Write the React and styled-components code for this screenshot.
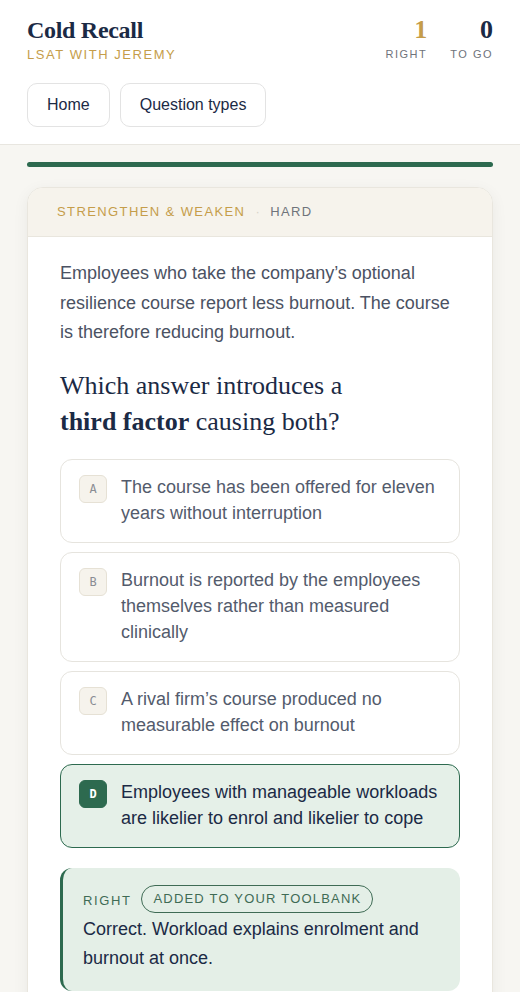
import React from "react";
import styled, { createGlobalStyle } from "styled-components";

const GlobalStyle = createGlobalStyle`
  * { box-sizing: border-box; }
  body {
    margin: 0;
    background: #f7f6f2;
    font-family: "Liberation Sans", Arial, sans-serif;
  }
`;

const options = [
  { letter: "A", text: "The course has been offered for eleven years without interruption" },
  { letter: "B", text: "Burnout is reported by the employees themselves rather than measured clinically" },
  { letter: "C", text: "A rival firm\u2019s course produced no measurable effect on burnout" },
  { letter: "D", text: "Employees with manageable workloads are likelier to enrol and likelier to cope", picked: true },
];

const App = () => {
  return (
    <>
      <GlobalStyle />
      <Header>
        <TopRow>
          <Brand>
            <Title>Cold Recall</Title>
            <Subtitle>LSAT WITH JEREMY</Subtitle>
          </Brand>
          <Stats>
            <Stat>
              <StatNum gold>1</StatNum>
              <StatLabel>RIGHT</StatLabel>
            </Stat>
            <Stat>
              <StatNum>0</StatNum>
              <StatLabel>TO GO</StatLabel>
            </Stat>
          </Stats>
        </TopRow>
        <Nav>
          <NavBtn>Home</NavBtn>
          <NavBtn>Question types</NavBtn>
        </Nav>
      </Header>
      <Main>
        <Progress />
        <Card>
          <CardHead>
            <Tag>STRENGTHEN &amp; WEAKEN</Tag>
            <Dot>·</Dot>
            <Level>HARD</Level>
          </CardHead>
          <CardBody>
            <Passage>
              Employees who take the company’s optional resilience course report
              less burnout. The course is therefore reducing burnout.
            </Passage>
            <Question>
              Which answer introduces a <b>third factor</b> causing both?
            </Question>
            <Options>
              {options.map((o) => (
                <Option key={o.letter} picked={o.picked}>
                  <Badge picked={o.picked}>{o.letter}</Badge>
                  <OptionText picked={o.picked}>{o.text}</OptionText>
                </Option>
              ))}
            </Options>
            <Feedback>
              <FeedbackTop>
                <Verdict>RIGHT</Verdict>
                <Pill>ADDED TO YOUR TOOLBANK</Pill>
              </FeedbackTop>
              <FeedbackText>
                Correct. Workload explains enrolment and burnout at once.
              </FeedbackText>
            </Feedback>
          </CardBody>
        </Card>
      </Main>
    </>
  );
};

const Header = styled.header`
  background: #fff;
  border-bottom: 1px solid #e8e6e0;
  padding: 16px 27px 17px;
`;

const TopRow = styled.div`
  display: flex;
  justify-content: space-between;
  align-items: flex-start;
`;

const Brand = styled.div`
  display: flex;
  flex-direction: column;
`;

const Title = styled.h1`
  margin: 0;
  font-family: "Liberation Serif", "Times New Roman", serif;
  font-size: 24px;
  line-height: 28px;
  font-weight: bold;
  letter-spacing: -0.3px;
  color: #1b2a45;
`;

const Subtitle = styled.div`
  margin-top: 3px;
  font-size: 13px;
  letter-spacing: 1.55px;
  color: #c59d4a;
`;

const Stats = styled.div`
  display: flex;
  gap: 23px;
`;

const Stat = styled.div`
  display: flex;
  flex-direction: column;
  align-items: flex-end;
`;

const StatNum = styled.div`
  font-family: "Liberation Serif", "Times New Roman", serif;
  font-size: 26px;
  line-height: 28px;
  font-weight: bold;
  color: ${(p) => (p.gold ? "#c59d4a" : "#1b2a45")};
`;

const StatLabel = styled.div`
  margin-top: 4px;
  font-size: 11px;
  letter-spacing: 1.5px;
  color: #6f737b;
`;

const Nav = styled.nav`
  display: flex;
  gap: 10px;
  margin-top: 21px;
`;

const NavBtn = styled.button`
  height: 44px;
  padding: 0 19px;
  background: #fff;
  border: 1px solid #e3e3e3;
  border-radius: 10px;
  font-family: "Liberation Sans", Arial, sans-serif;
  font-size: 16px;
  color: #1b2a45;
  cursor: pointer;
`;

const Main = styled.main`
  padding: 17px 27px 0;
`;

const Progress = styled.div`
  height: 5px;
  border-radius: 3px;
  background: #2d6a4f;
`;

const Card = styled.section`
  margin-top: 20px;
  background: #fff;
  border: 1px solid #e9e6de;
  border-radius: 16px;
  box-shadow: 0 4px 16px rgba(0, 0, 0, 0.06);
  overflow: hidden;
`;

const CardHead = styled.div`
  display: flex;
  align-items: center;
  height: 49px;
  padding: 0 29px 2px;
  background: #f6f3ec;
  border-bottom: 1px solid #e9e6de;
  font-size: 13px;
  letter-spacing: 1.4px;
`;

const Tag = styled.span`
  color: #c59d4a;
`;

const Dot = styled.span`
  margin: 0 9px 0 10px;
  color: #d8d4ca;
`;

const Level = styled.span`
  color: #6f737b;
`;

const CardBody = styled.div`
  padding: 22px 32px 40px;
`;

const Passage = styled.p`
  margin: 0;
  font-size: 18px;
  line-height: 29.5px;
  color: #4b5263;
`;

const Question = styled.h2`
  margin: 20px 0 0;
  max-width: 320px;
  font-family: "Liberation Serif", "Times New Roman", serif;
  font-size: 26px;
  line-height: 36px;
  font-weight: normal;
  color: #1b2a45;

  b {
    font-weight: bold;
  }
`;

const Options = styled.div`
  display: flex;
  flex-direction: column;
  gap: 9px;
  margin-top: 19px;
`;

const Option = styled.div`
  display: flex;
  gap: 14px;
  align-items: flex-start;
  padding: 14px 18px 16px;
  background: ${(p) => (p.picked ? "#e5f0e8" : "#fff")};
  border: ${(p) => (p.picked ? "1.5px solid #2d6a4f" : "1px solid #e6e4de")};
  border-radius: 12px;
`;

const Badge = styled.div`
  flex: none;
  width: 28px;
  height: 28px;
  margin-top: 1px;
  display: flex;
  align-items: center;
  justify-content: center;
  border-radius: 6px;
  background: ${(p) => (p.picked ? "#2d6a4f" : "#f6f3ec")};
  border: 1px solid ${(p) => (p.picked ? "#2d6a4f" : "#e6e1d5")};
  font-family: "DejaVu Sans Mono", "Liberation Mono", monospace;
  font-size: 12px;
  font-weight: ${(p) => (p.picked ? "bold" : "normal")};
  color: ${(p) => (p.picked ? "#fff" : "#8a8d93")};
`;

const OptionText = styled.div`
  font-size: 18px;
  line-height: 26px;
  color: ${(p) => (p.picked ? "#1b2a45" : "#535b6c")};
`;

const Feedback = styled.div`
  margin-top: 20px;
  padding: 17px 20px 18px 20px;
  background: #e4efe7;
  border-left: 3px solid #2d6a4f;
  border-radius: 12px;
`;

const FeedbackTop = styled.div`
  display: flex;
  align-items: center;
  gap: 10px;
`;

const Verdict = styled.span`
  font-size: 13px;
  letter-spacing: 1.6px;
  color: #3f6b55;
  margin-top: 4px;
`;

const Pill = styled.span`
  padding: 5px 11px 6px;
  border: 1.5px solid #3f6b55;
  border-radius: 14px;
  font-size: 13px;
  letter-spacing: 1.2px;
  color: #3f6b55;
`;

const FeedbackText = styled.p`
  margin: 2px 0 0;
  font-size: 18px;
  line-height: 29px;
  color: #1b2a45;
`;

export default App;
